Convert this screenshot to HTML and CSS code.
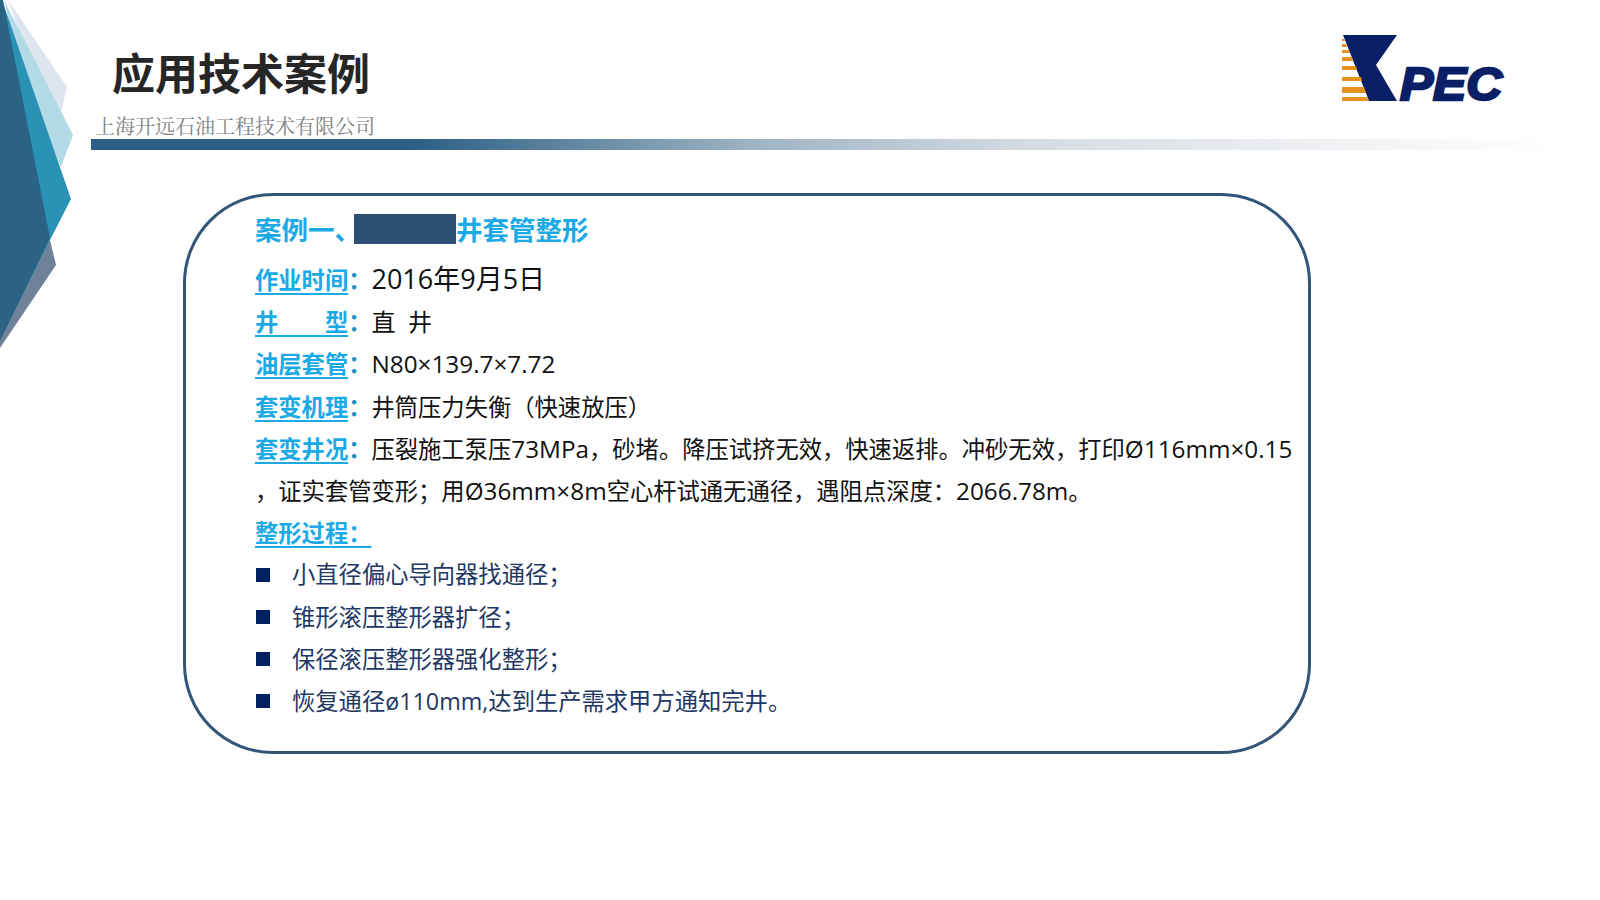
FILE: index.html
```html
<!DOCTYPE html>
<html lang="zh-CN">
<head>
    <meta charset="UTF-8">
    <title>应用技术案例</title>
    <link rel="stylesheet" href="styles.css">
</head>
<body>
    <div class="slide">
        <svg class="corner-art" width="80" height="350" viewBox="0 0 80 350">
            <polygon points="8,0 67,87 58,125 30,60" fill="#dde5ef"/>
            <polygon points="4,0 73,135 61,167 25,90" fill="#b4dae8"/>
            <polygon points="50,240 56,265 0,348 0,300" fill="#6f8299"/>
            <polygon points="2,0 71,199 50,240 0,340 0,0" fill="#2a92b4"/>
            <polygon points="0,0 3,0 50,238 0,341" fill="#2c6284"/>
        </svg>

        <header class="top">
            <div class="top-row">
                <div class="heading">
                    <h1>应用技术案例</h1>
                    <div class="company">上海开远石油工程技术有限公司</div>
                </div>
                <svg class="logo" width="172" height="70" viewBox="0 0 172 70">
                    <polygon points="3,0 57,0 36,30 57,66 29,66" fill="#0a1f66"/>
                    <g fill="#e8921e">
                        <polygon points="2,4 4,4 5,6 2,6"/>
                        <polygon points="2,9 6,9 7,12 2,12"/>
                        <polygon points="2,15 9,15 10,18 2,18"/>
                        <polygon points="2,22 12,22 13,26 2,26"/>
                        <polygon points="2,31 16,31 17,35 2,35"/>
                        <polygon points="2,42 21,42 22,46 2,46"/>
                        <polygon points="2,52 24,52 26,58 2,58"/>
                        <polygon points="2,62 27,62 29,66 2,66"/>
                    </g>
                    <text class="logo-text" x="60" y="65" textLength="102" lengthAdjust="spacingAndGlyphs">PEC</text>
                </svg>
            </div>
            <div class="rule"></div>
        </header>

        <main class="card">
            <h2 class="case-title">案例一、<span class="redacted"></span>井套管整形</h2>
            <p class="row"><span class="label"><u>作业时间</u>：</span><span class="date">2016年9月5日</span></p>
            <p class="row"><span class="label"><u>井&emsp;&emsp;型</u>：</span><span class="well-type">直&nbsp;&nbsp;井</span></p>
            <p class="row"><span class="label"><u>油层套管</u>：</span><span class="latin">N80×139.7×7.72</span></p>
            <p class="row"><span class="label"><u>套变机理</u>：</span>井筒压力失衡（快速放压）</p>
            <p class="row"><span class="label"><u>套变井况</u>：</span>压裂施工泵压<span class="latin">73MPa</span>，砂堵。降压试挤无效，快速返排。冲砂无效，打印<span class="latin">Ø116mm×0.15</span><br>，证实套管变形；用<span class="latin">Ø36mm×8m</span>空心杆试通无通径，遇阻点深度：<span class="latin">2066.78m</span>。</p>
            <p class="row"><span class="label"><u>整形过程：</u></span></p>
            <ul class="steps">
                <li>小直径偏心导向器找通径；</li>
                <li>锥形滚压整形器扩径；</li>
                <li>保径滚压整形器强化整形；</li>
                <li>恢复通径ø110mm,达到生产需求甲方通知完井。</li>
            </ul>
        </main>
    </div>
</body>
</html>
```

FILE: styles.css
```css
* {
    margin: 0;
    padding: 0;
    box-sizing: border-box;
}

body {
    font-family: "Open Sans", "Noto Sans CJK SC", sans-serif;
    background: #ffffff;
    color: #111111;
}

.slide {
    position: relative;
    width: 1600px;
    height: 900px;
    overflow: hidden;
    padding: 0 40px 0 91px;
}

.corner-art {
    position: absolute;
    left: 0;
    top: 0;
}

.top-row {
    display: flex;
    justify-content: space-between;
    padding-right: 48px;
}

.heading {
    padding: 43px 0 0 4px;
}

h1 {
    font-family: "Noto Sans CJK SC", sans-serif;
    font-size: 43px;
    font-weight: 700;
    line-height: 56px;
    color: #262626;
    padding-left: 17px;
}

.company {
    font-family: "Noto Serif CJK SC", "Liberation Serif", serif;
    font-size: 20px;
    line-height: 26px;
    color: #7f7f7f;
    margin-top: 14px;
}

.logo {
    margin-top: 35px;
    overflow: visible;
}

.logo-text {
    font-family: "Liberation Sans", sans-serif;
    font-size: 46px;
    font-weight: 700;
    font-style: italic;
    fill: #0a1f66;
    stroke: #0a1f66;
    stroke-width: 2.5px;
}

.rule {
    height: 11px;
    background: linear-gradient(90deg, #2c5f85 0%, #2c5f85 22%, #9fb3c3 45%, #d5dce3 64%, #eff1f4 84%, #ffffff 100%);
}

.card {
    width: 1128px;
    height: 561px;
    margin: 43px 0 0 92px;
    padding: 15px 0 0 69px;
    border: 3px solid #33557a;
    border-radius: 90px;
}

.case-title {
    display: flex;
    align-items: center;
    font-family: "Noto Sans CJK SC", sans-serif;
    font-size: 26.5px;
    font-weight: 700;
    line-height: 36px;
    color: #1caae6;
    margin-bottom: 12px;
}

.redacted {
    width: 102px;
    height: 30px;
    margin-left: -7px;
    background: #2e5074;
}

.row {
    font-size: 23.3px;
    line-height: 42.2px;
    white-space: nowrap;
}

.label {
    font-family: "Noto Sans CJK SC", sans-serif;
    font-weight: 700;
    line-height: 1;
    color: #1d8fc4;
}

.label u {
    color: #1caae6;
    text-underline-offset: 4px;
}

.date {
    font-size: 27px;
    line-height: 1;
}

.well-type {
    font-size: 24px;
    line-height: 1;
}

.latin {
    font-size: 24.3px;
    line-height: 1;
}

.steps {
    list-style: none;
    margin-top: -1px;
    color: #1f3864;
    font-size: 23.3px;
    line-height: 42.2px;
}

.steps li {
    display: flex;
    align-items: center;
    gap: 22px;
    padding-left: 1px;
}

.steps li::before {
    content: "";
    width: 14px;
    height: 14px;
    background: #002060;
}
```
